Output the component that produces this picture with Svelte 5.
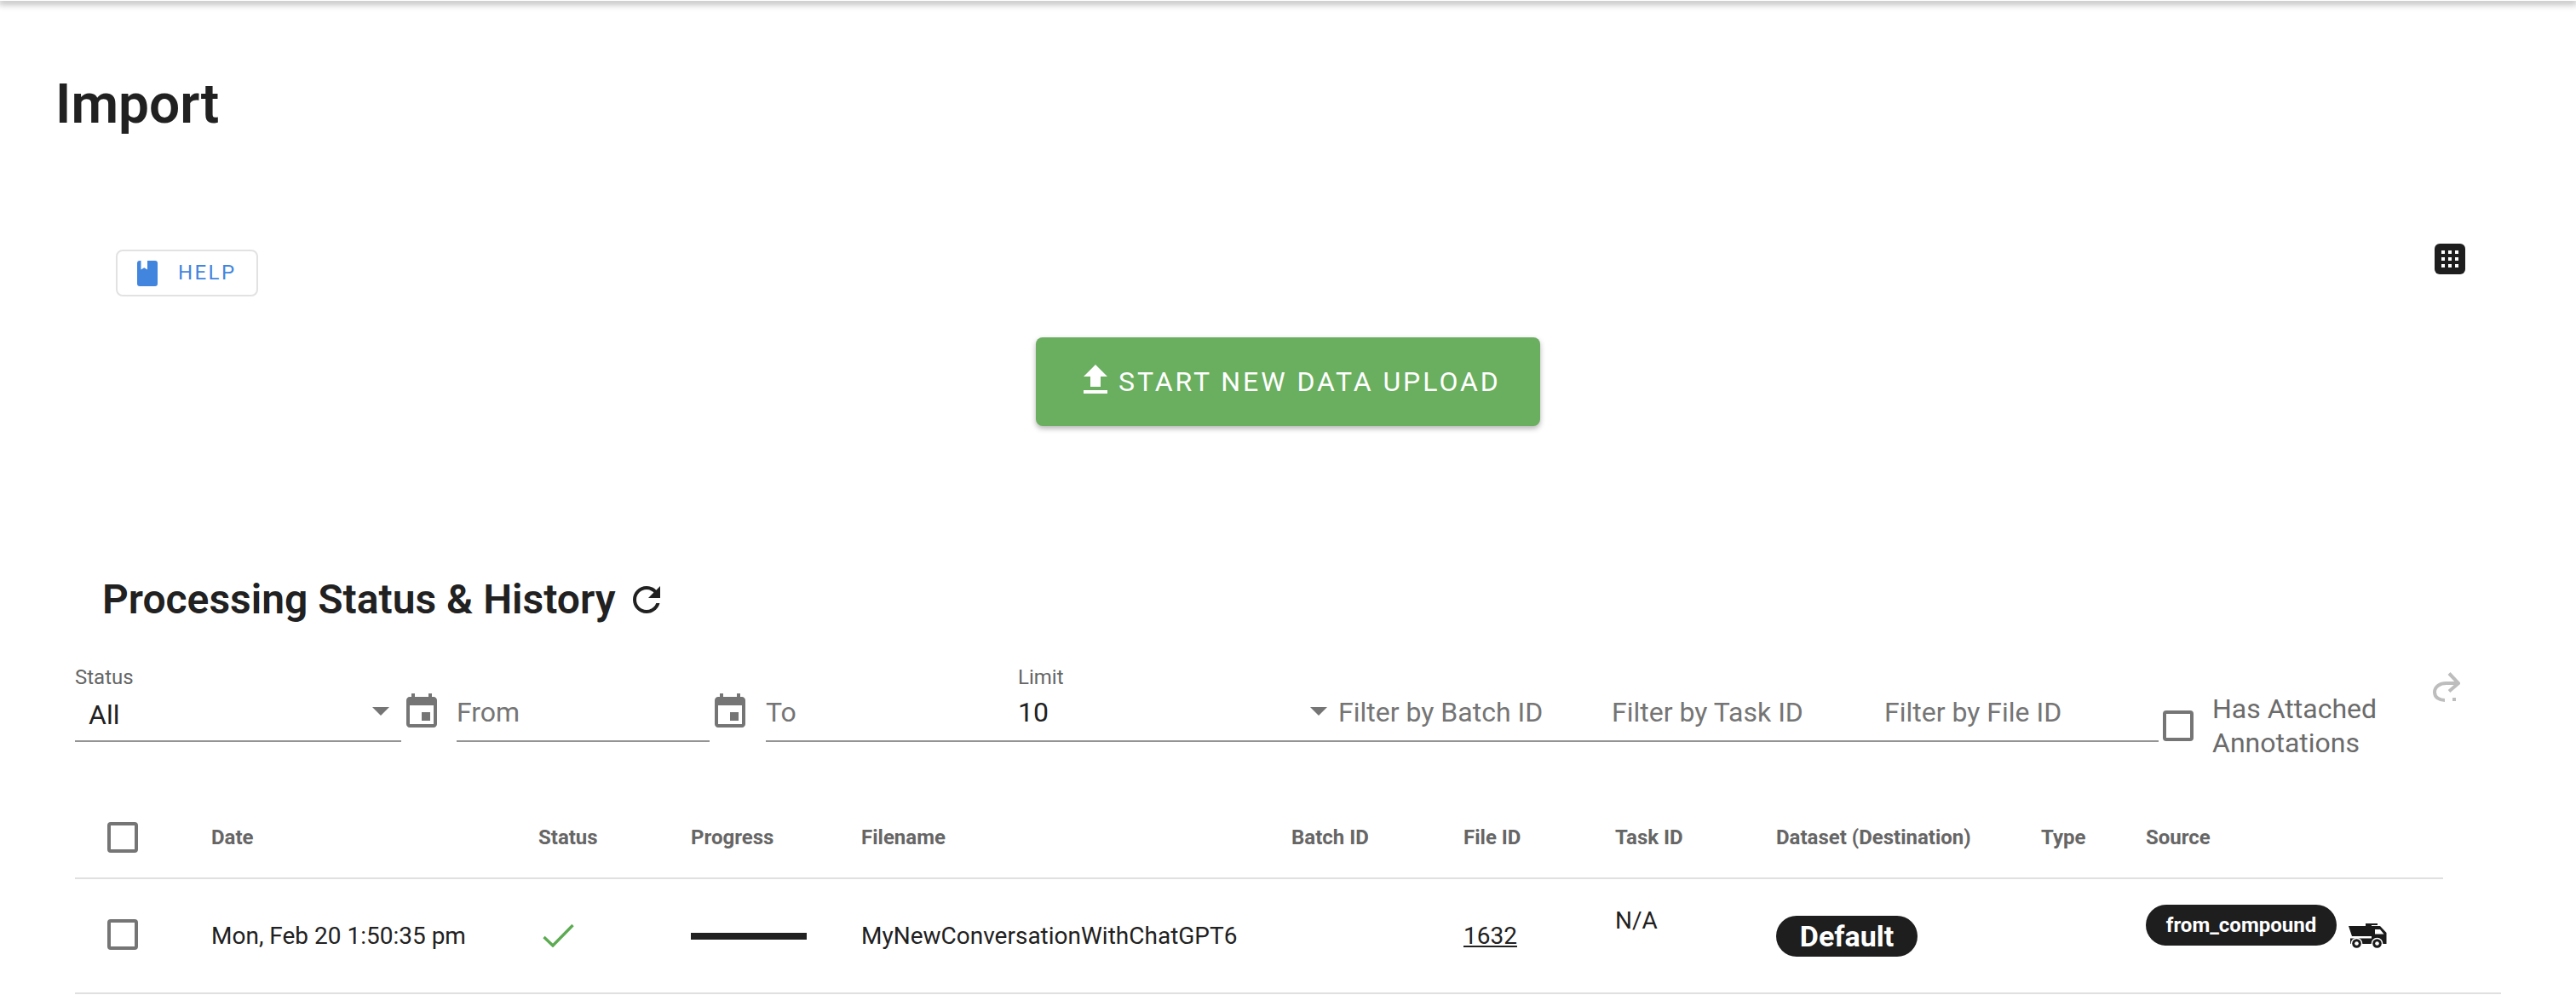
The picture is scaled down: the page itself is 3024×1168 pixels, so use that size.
<script>
  const heads = ['Date','Status','Progress','Filename','Batch ID','File ID','Task ID','Dataset (Destination)','Type','Source'];
</script>

<div class="page">
  <div class="appbar"></div>
  <h1>Import</h1>

  <div class="toolbar">
    <button class="help">
      <svg class="help-icon" viewBox="4 2 16 20"><path d="M18 22a2 2 0 0 0 2-2V4a2 2 0 0 0-2-2h-6v7L9.5 7.5 7 9V2H6a2 2 0 0 0-2 2v16a2 2 0 0 0 2 2z"/></svg>
      <span>HELP</span>
    </button>
    <svg class="grid-icon" viewBox="0 0 36 36">
      <rect width="36" height="36" rx="6" fill="#1e1e1e"/>
      <g fill="#fff">
        <rect x="8" y="8" width="4" height="4"/><rect x="16" y="8" width="4" height="4"/><rect x="24" y="8" width="4" height="4"/>
        <rect x="8" y="16" width="4" height="4"/><rect x="16" y="16" width="4" height="4"/><rect x="24" y="16" width="4" height="4"/>
        <rect x="8" y="24" width="4" height="4"/><rect x="16" y="24" width="4" height="4"/><rect x="24" y="24" width="4" height="4"/>
      </g>
    </svg>
  </div>

  <div class="cta">
    <button class="upload">
      <svg viewBox="0 0 24 24" width="48" height="48"><path fill="#fff" d="M9 16h6v-6h4l-7-7-7 7h4zm-4 2h14v2H5z"/></svg>
      <span>START NEW DATA UPLOAD</span>
    </button>
  </div>

  <div class="section-title">
    <h2>Processing Status &amp; History</h2>
    <svg viewBox="0 0 24 24" width="48" height="48"><path fill="#212121" d="M17.65 6.35C16.2 4.9 14.21 4 12 4c-4.42 0-7.99 3.58-7.99 8s3.57 8 7.99 8c3.73 0 6.84-2.55 7.73-6h-2.08c-.82 2.33-3.04 4-5.65 4-3.31 0-6-2.69-6-6s2.69-6 6-6c1.66 0 3.14.69 4.22 1.78L13 11h7V4l-2.35 2.35z"/></svg>
  </div>

  <div class="filters">
    <div class="field status">
      <label>Status</label>
      <div class="value all">All</div>
      <i class="arrow"></i>
    </div>
    <svg class="cal" viewBox="0 0 24 24" width="48" height="48"><path d="M17 12h-5v5h5v-5zM16 1v2H8V1H6v2H5c-1.11 0-1.99.9-1.99 2L3 19c0 1.1.89 2 2 2h14c1.1 0 2-.9 2-2V5c0-1.1-.9-2-2-2h-1V1h-2zm3 18H5V8h14v11z"/></svg>
    <div class="field from"><div class="value ph">From</div></div>
    <svg class="cal" viewBox="0 0 24 24" width="48" height="48"><path d="M17 12h-5v5h5v-5zM16 1v2H8V1H6v2H5c-1.11 0-1.99.9-1.99 2L3 19c0 1.1.89 2 2 2h14c1.1 0 2-.9 2-2V5c0-1.1-.9-2-2-2h-1V1h-2zm3 18H5V8h14v11z"/></svg>
    <div class="field to"><div class="value ph">To</div></div>
    <div class="field limit">
      <label>Limit</label>
      <div class="value">10</div>
      <i class="arrow"></i>
    </div>
    <div class="field batch"><div class="value ph">Filter by Batch ID</div></div>
    <div class="field task"><div class="value ph">Filter by Task ID</div></div>
    <div class="field file"><div class="value ph">Filter by File ID</div></div>
    <div class="annot">
      <span class="box"></span>
      <span class="annot-label">Has Attached Annotations</span>
    </div>
    <svg class="redo" viewBox="0 0 32 35" width="32" height="35" fill="none" stroke="#bdbdbd" stroke-width="4">
      <path d="M19 1.5 30 13 19 22.5M30 13H16C8 13 2 17 2 23.5S8 33 14 33"/>
      <rect x="23" y="30" width="4" height="4" fill="#bdbdbd" stroke="none"/>
    </svg>
  </div>

  <div class="thead cols">
    <div class="chk"><span class="box"></span></div>
    {#each heads as h}<div class="th">{h}</div>{/each}
  </div>

  <div class="trow cols">
    <div class="chk"><span class="box"></span></div>
    <div class="td">Mon, Feb 20 1:50:35 pm</div>
    <div class="td">
      <svg class="check" viewBox="0 0 37 27" width="37" height="27"><path fill="none" stroke="#5cab52" stroke-width="3.4" d="M1.5 15 12 25 35.500 1"/></svg>
    </div>
    <div class="td"><div class="bar"></div></div>
    <div class="td">MyNewConversationWithChatGPT6</div>
    <div class="td"></div>
    <div class="td"><a href="#top">1632</a></div>
    <div class="td na">N/A</div>
    <div class="td"><span class="chip big">Default</span></div>
    <div class="td"></div>
    <div class="td source">
      <span class="chip small">from_compound</span>
      <svg class="truck" viewBox="0 0 45 29" width="45" height="29">
        <path fill="#1a1a1a" d="M0 3h20V0h14v2h-7v1h10l7.500 8v13H2V17.500h25V15H4z"/>
        <path fill="#fff" d="M31 7h6l4.500 5.500H31z"/>
        <circle cx="9.500" cy="23.500" r="6.800" fill="#fff"/>
        <circle cx="33.500" cy="23.500" r="6.800" fill="#fff"/>
        <circle cx="9.500" cy="23.500" r="5.300" fill="#1a1a1a"/>
        <circle cx="33.500" cy="23.500" r="5.300" fill="#1a1a1a"/>
        <circle cx="9.500" cy="23.500" r="2.300" fill="#fff"/>
        <circle cx="33.500" cy="23.500" r="2.300" fill="#fff"/>
      </svg>
    </div>
  </div>
</div>

<style>
  :global(body) {
    margin: 0;
    background: #fff;
    font-family: Roboto, "Liberation Sans", sans-serif;
    color: #212121;
  }
  .page {
    width: 3024px;
    height: 1168px;
    overflow: hidden;
  }
  .appbar {
    height: 1px;
    box-shadow: 0 1px 9px 2px rgba(0, 0, 0, 0.42);
  }
  h1 {
    margin: 84px 0 0 65px;
    font-size: 64px;
    line-height: 75px;
    font-weight: 600;
    color: #212121;
    letter-spacing: 0;
  }
  .toolbar {
    margin-top: 126px;
    padding: 0 130px 0 136px;
    display: flex;
    justify-content: space-between;
    align-items: flex-start;
  }
  .help {
    margin-top: 7px;
    width: 167px;
    height: 55px;
    box-sizing: border-box;
    display: flex;
    align-items: center;
    padding: 0 0 0 23px;
    gap: 24px;
    background: #fff;
    border: 2px solid #e2e2e2;
    border-radius: 8px;
    color: #4285de;
    font: 400 24px Roboto, sans-serif;
    letter-spacing: 2.4px;
  }
  .help span { margin-top: -2px; }
  .help-icon { width: 24px; height: 30px; fill: #4285de; }
  .grid-icon { width: 36px; height: 36px; }
  .cta {
    margin-top: 48px;
    display: flex;
    justify-content: center;
  }
  .upload {
    width: 592px;
    height: 104px;
    border: 0;
    border-radius: 8px;
    background: #6aae5f;
    color: #fff;
    box-shadow: 0 3px 6px rgba(0, 0, 0, 0.3);
    display: flex;
    align-items: center;
    padding: 0 0 0 46px;
    gap: 3px;
    font: 400 32px Roboto, sans-serif;
    letter-spacing: 2.95px;
  }
  .upload svg { margin-top: -4px; }
  .section-title {
    margin-top: 172px;
    padding-left: 120px;
    height: 64px;
    display: flex;
    align-items: center;
    gap: 12px;
  }
  h2 {
    margin: 0;
    font-size: 48px;
    font-weight: 600;
    color: #212121;
    line-height: 64px;
  }
  .filters {
    margin-top: 47px;
    padding-left: 88px;
    height: 88px;
    display: flex;
    align-items: flex-end;
  }
  .field {
    position: relative;
    height: 86px;
    box-sizing: content-box;
    border-bottom: 2px solid #949494;
    flex: none;
  }
  label {
    display: block;
    margin-top: -3px;
    font-size: 24px;
    line-height: 30px;
    color: #666;
  }
  .value {
    font-size: 32px;
    line-height: 38px;
    color: #212121;
    position: absolute;
    bottom: 14px;
    left: 0;
    white-space: nowrap;
  }
  .value.all { left: 16px; bottom: 11px; }
  .value.ph { color: #757575; }
  .arrow {
    position: absolute;
    right: 14px;
    top: 47px;
    width: 0;
    height: 0;
    border-left: 10px solid transparent;
    border-right: 10px solid transparent;
    border-top: 10px solid #757575;
  }
  .status { width: 383px; }
  .from { width: 297px; margin-left: 0; }
  .to { width: 296px; }
  .limit { width: 368px; }
  .limit .arrow { right: 5px; }
  .batch { width: 321px; }
  .task { width: 320px; }
  .file { width: 330px; }
  .batch .value, .task .value, .file .value { left: 8px; }
  .cal {
    flex: none;
    fill: #757575;
    align-self: flex-end;
    margin-bottom: 11px;
  }
  .cal:nth-of-type(1) { margin-right: 17px; }
  .cal:nth-of-type(2) { margin-right: 18px; }
  .annot {
    flex: none;
    display: flex;
    align-items: center;
    width: 322px;
    height: 84px;
    margin-left: 5px;
    gap: 22px;
    margin-bottom: -23px;
  }
  .box {
    display: block;
    flex: none;
    width: 36px;
    height: 36px;
    box-sizing: border-box;
    border: 4px solid #757575;
    border-radius: 4px;
  }
  .annot-label {
    width: 250px;
    font-size: 32px;
    line-height: 40px;
    color: #6b6b6b;
  }
  .redo {
    flex: none;
    align-self: flex-start;
    margin: 6px 0 0 -5px;
  }
  .cols {
    display: grid;
    grid-template-columns: 160px 384px 179px 200px 505px 202px 178px 189px 311px 123px 1fr;
  }
  .thead {
    margin-top: 59px;
    width: 2780px;
    margin-left: 88px;
    height: 94px;
    padding-top: 6px;
    border-bottom: 2px solid #e0e0e0;
    align-items: center;
  }
  .chk { padding-left: 38px; }
  .th {
    font-size: 24px;
    font-weight: 700;
    color: #666;
    white-space: nowrap;
  }
  .trow {
    width: 2848px;
    margin-left: 88px;
    height: 133px;
    border-bottom: 2px solid #e0e0e0;
    align-items: center;
  }
  .trow .chk { margin-top: -4px; }
  .td {
    font-size: 28px;
    color: #212121;
    white-space: nowrap;
  }
  .td a { color: #212121; text-decoration: underline; }
  .check { display: block; margin-left: 5px; }
  .bar { width: 136px; height: 8px; background: #212121; }
  .na { align-self: start; padding-top: 32px; }
  .chip {
    display: inline-block;
    background: #1e1e1e;
    color: #fff;
    border-radius: 24px;
    box-sizing: border-box;
    text-align: center;
  }
  .chip.big {
    width: 166px;
    height: 48px;
    line-height: 48px;
    font-size: 34px;
    font-weight: 700;
  }
  .chip.small {
    width: 224px;
    height: 48px;
    line-height: 48px;
    font-size: 24px;
    font-weight: 700;
  }
  .source { display: flex; align-self: start; align-items: flex-start; gap: 14px; padding-top: 30px; }
  .truck { margin-top: 22px; }
</style>
